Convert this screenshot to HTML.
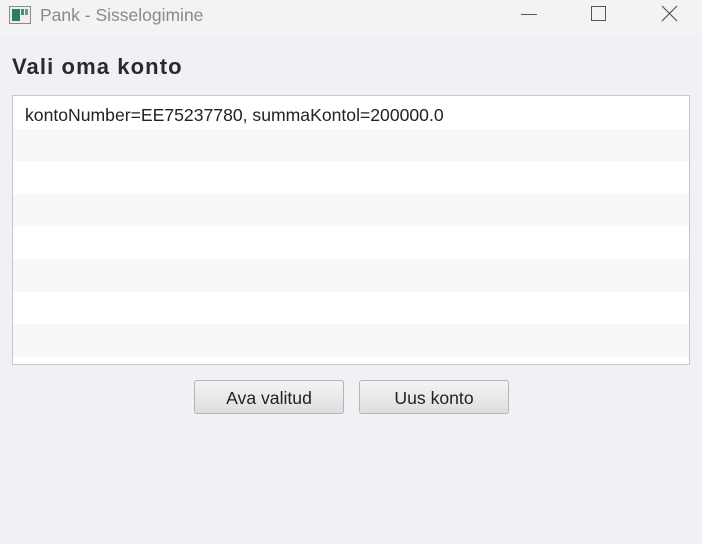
<!DOCTYPE html>
<html><head><style>
body{margin:0;width:702px;height:544px;background:#f0f1f4;font-family:"Liberation Sans",sans-serif;position:relative;overflow:hidden}
.tb{position:absolute;left:0;top:0;width:702px;height:36px;background:#f3f3f3}
.tt{position:absolute;left:40px;top:5px;font-size:17.5px;color:#8a8a8a}
.h{position:absolute;left:12px;top:54px;font-size:22px;letter-spacing:1.1px;font-weight:bold;color:#2a2a2a}
.list{position:absolute;left:12px;top:95px;width:676px;height:268px;border:1px solid #c8c8c8;background:#fff;overflow:hidden}
.r{height:32.6px;font-size:17.6px;color:#222;line-height:38px;padding-left:12px}
.r:nth-child(even){background:#f8f8f8}
.b{position:absolute;top:380px;width:148px;height:32px;border:1px solid #b4b4b4;border-radius:3px;background:linear-gradient(#f4f4f4,#dedede);font-size:17.6px;color:#222;text-align:center;line-height:35px}
</style></head><body>
<div class="tb">
<svg style="position:absolute;left:9px;top:6px" width="22" height="18"><rect x="0.5" y="0.5" width="21" height="17" fill="#eee" stroke="#888"/><rect x="3" y="3" width="8" height="12" fill="#2b7a6a"/><rect x="12" y="3" width="3" height="6" fill="#4a8a7a"/><rect x="16" y="3" width="3" height="6" fill="#6a9a8a"/></svg>
<div class="tt">Pank - Sisselogimine</div>
<div style="position:absolute;left:521px;top:14px;width:16px;height:1px;background:#555"></div>
<div style="position:absolute;left:591px;top:6px;width:13px;height:13px;border:1px solid #555"></div>
<svg style="position:absolute;left:661px;top:5px" width="17" height="17"><path d="M1 1L16 16M16 1L1 16" stroke="#555" stroke-width="1.2"/></svg>
</div>
<div class="h">Vali oma konto</div>
<div class="list">
<div class="r">kontoNumber=EE75237780, summaKontol=200000.0</div>
<div class="r"></div><div class="r"></div><div class="r"></div><div class="r"></div><div class="r"></div><div class="r"></div><div class="r"></div><div class="r"></div>
</div>
<div class="b" style="left:194px">Ava valitud</div>
<div class="b" style="left:359px">Uus konto</div>
</body></html>
